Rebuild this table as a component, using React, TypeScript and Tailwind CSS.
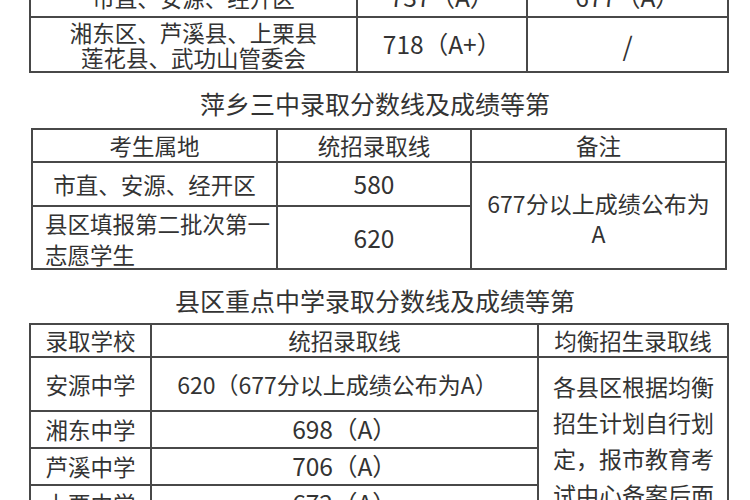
import React from "react";

const cell = "bg-white flex items-center justify-center text-center";
const num = "bg-white flex items-center justify-center text-center text-[24.5px]";

export default function App() {
  return (
    <div className="w-[750px] h-[500px] overflow-hidden bg-white flex flex-col text-[#333] font-['Noto_Sans_CJK_SC','Noto_Sans',sans-serif] leading-none">
      {/* Table 1 (cut off at top) */}
      <div className="ml-[29px] -mt-[24px] w-[700px] grid grid-cols-[325px_168px_199px] grid-rows-[38px_53px] gap-[2px] bg-[#484848] p-[2px] text-[22.5px] shrink-0">
        <div className={cell}>市直、安源、经开区</div>
        <div className={num}>737（A）</div>
        <div className={num}>677（A）</div>
        <div className={`${cell} flex-col leading-[25px]`}>
          <span>湘东区、芦溪县、上栗县</span>
          <span>莲花县、武功山管委会</span>
        </div>
        <div className={num}>718（A+）</div>
        <div className={`${num} text-[26px]`}>/</div>
      </div>

      {/* Title 2 */}
      <div className="h-[55px] shrink-0 flex items-center justify-center pt-[6px] text-[25px]">
        萍乡三中录取分数线及成绩等第
      </div>

      {/* Table 2 */}
      <div className="ml-[31px] w-[696px] grid grid-cols-[243px_192px_253px] grid-rows-[31px_42px_61px] gap-[2px] bg-[#484848] p-[2px] text-[22.5px] shrink-0">
        <div className={cell}>考生属地</div>
        <div className={cell}>统招录取线</div>
        <div className={cell}>备注</div>
        <div className={cell}>市直、安源、经开区</div>
        <div className={num}>580</div>
        <div className={`${cell} row-span-2 flex-col leading-[30px] pt-[4px] text-[23px]`}>
          <span>677分以上成绩公布为</span>
          <span>A</span>
        </div>
        <div className="bg-white flex flex-col justify-center items-start pl-[12px] leading-[31px] pt-[2px]">
          <span>县区填报第二批次第一</span>
          <span>志愿学生</span>
        </div>
        <div className={`${num} pt-[2px]`}>620</div>
      </div>

      {/* Title 3 */}
      <div className="h-[53px] shrink-0 flex items-center justify-center pt-[8px] text-[25px]">
        县区重点中学录取分数线及成绩等第
      </div>

      {/* Table 3 */}
      <div className="ml-[29px] w-[700px] grid grid-cols-[119px_385px_188px] grid-rows-[31px_52px_35px_35px_35px] gap-[2px] bg-[#484848] p-[2px] text-[22.5px] shrink-0">
        <div className={cell}>录取学校</div>
        <div className={cell}>统招录取线</div>
        <div className={cell}>均衡招生录取线</div>
        <div className={cell}>安源中学</div>
        <div className={`${cell} pr-[14px] text-[23px]`}>620（677分以上成绩公布为A）</div>
        <div className="bg-white row-span-4 flex flex-col items-start pl-[14px] pt-[10px] leading-[36px] text-[23px]">
          <span>各县区根据均衡</span>
          <span>招生计划自行划</span>
          <span>定，报市教育考</span>
          <span>试中心备案后面</span>
          <span>向社会公布。</span>
        </div>
        <div className={cell}>湘东中学</div>
        <div className={num}>698（A）</div>
        <div className={cell}>芦溪中学</div>
        <div className={num}>706（A）</div>
        <div className={cell}>上栗中学</div>
        <div className={num}>672（A）</div>
      </div>
    </div>
  );
}
